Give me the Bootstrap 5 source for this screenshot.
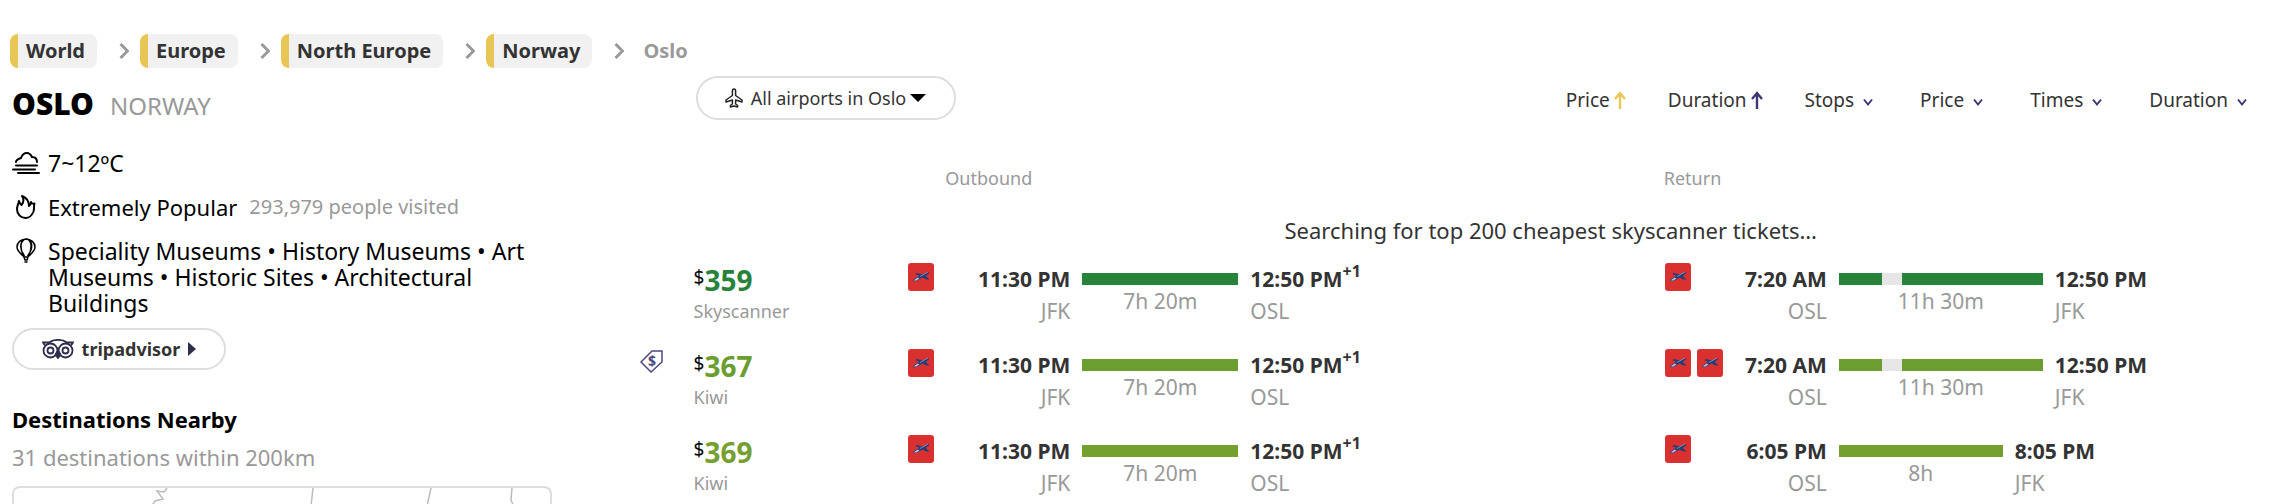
<!DOCTYPE html>
<html lang="en">
<head>
<meta charset="utf-8">
<meta name="viewport" content="width=device-width, initial-scale=1">
<title>Flights to Oslo</title>
<link href="https://cdn.jsdelivr.net/npm/bootstrap@5.3.0/dist/css/bootstrap.min.css" rel="stylesheet">
<style>
  body { font-family: "Noto Sans", sans-serif; font-size: 22px; line-height: 26px; color: #333; background: #fff; overflow: hidden; }
  button { font-family: inherit; }
  svg { display: block; }
  .soft { color: #999; }
  .crumbs { padding: 34px 10px 0; font-size: 20px; font-weight: 700; line-height: 34px; }
  .crumb { background: #f1f1f1; border-left: 8px solid #e8c656; border-radius: 8px; color: #333; text-decoration: none; padding: 0 12px 0 8px; }
  .crumb-arrow { margin: 0 11px 0 22px; }
  .sidebar { flex: 0 0 28%; padding: 16px 88px 0 12px; color: #000; }
  .city { font-size: 30px; font-weight: 900; line-height: 40px; }
  .country { font-size: 24px; line-height: 40px; }
  .facts { font-size: 23px; margin-top: 24px; }
  .fact { gap: 8px; margin-bottom: 18px; }
  .fact-icon { flex: 0 0 28px; }
  .popular { font-size: 22px; }
  .visited { font-size: 20px; }
  .pill { background: #fff; border: 2px solid #ddd; border-radius: 22px; padding: 0; font-size: 18px; color: #333; }
  .trip { height: 42px; width: 214px; font-weight: 700; margin-top: -6px; }
  .airports { height: 44px; width: 260px; }
  .nearby { font-size: 22px; line-height: 26px; margin-top: 36px; }
  .nearby-map { border: 2px solid #ddd; border-radius: 8px 8px 0 0; min-height: 0; }
  .results { padding-top: 8px; min-width: 0; }
  .toolbar { padding: 0 32px 0 56px; }
  .sorters { gap: 42px; padding-top: 3px; }
  .sorter { background: none; border: 0; padding: 0; font-size: 19px; color: #333; }
  .yellow { color: #e8c656; }
  .violet { color: #3e3672; }
  .flights { table-layout: fixed; margin-top: 45px; }
  .flights th { font-size: 18px; font-weight: 400; color: #999; height: 26px; padding: 0 0 0 38px; }
  .flights .th-return { padding-left: 0; }
  .flights td { height: 86px; padding: 0; vertical-align: top; }
  .flights tr:last-child td { height: 66px; }
  .flights tr .searching { height: 72px; padding: 26px 0 0 178px; }
  .col-tag { width: 54px; }
  .col-price { width: 13%; }
  .col-out { width: 46%; }
  .price { font-size: 28px; font-weight: 700; line-height: 34px; }
  .dollar { font-size: 19px; font-weight: 400; color: #000; line-height: 20px; }
  .seller { font-size: 18px; line-height: 28px; }
  .carrier { width: 163px; }
  .stop { line-height: 32px; font-size: 21px; }
  .clock { font-weight: 700; color: #333; }
  .next-day { font-size: 16px; line-height: 16px; }
  .track { height: 12px; margin-top: 10px; }
  .best { color: #27833a; }
  .good { color: #6b9d30; }
  .fair { color: #73a02e; }
  .flown { background: currentColor; }
  .layover { background: #e6e6e6; }
</style>
</head>
<body class="vh-100 d-flex flex-column">
<svg width="0" height="0" class="position-absolute" aria-hidden="true">
  <defs>
    <symbol id="airline" viewBox="0 0 26 28">
      <rect width="26" height="28" rx="3" fill="#db3030"/>
      <path d="M5 17l4-3 3-1-5-2 2-1 6 1.500 5-2.500 1.500 1-4 3 4 3.500-3 0-4-2-5 3-4 1z" fill="#1c3f7c"/>
      <path d="M5.500 17.500l4-3 2 1-3 2z" fill="#b7bfd8"/>
      <path d="M12 13.500l8-4.500" stroke="#7d8fbe"/>
    </symbol>
    <symbol id="crumb-chevron" viewBox="0 0 10 16"><path d="M1.500 1l7 7-7 7" fill="none" stroke="#999" stroke-width="3"/></symbol>
    <symbol id="down" viewBox="0 0 20 20"><path d="M6 9.500l4 5 4-5" fill="none" stroke="#3e3672" stroke-width="2"/></symbol>
    <symbol id="up" viewBox="0 0 12 18"><path d="M6 18V2M1 8l5-6 5 6" fill="none" stroke="currentColor" stroke-width="2.400"/></symbol>
  </defs>
</svg>

<nav class="crumbs d-flex align-items-center" aria-label="Breadcrumb">
  <a class="crumb" href="#">World</a>
  <svg class="crumb-arrow" width="10" height="16"><use href="#crumb-chevron"/></svg>
  <a class="crumb" href="#">Europe</a>
  <svg class="crumb-arrow" width="10" height="16"><use href="#crumb-chevron"/></svg>
  <a class="crumb" href="#">North Europe</a>
  <svg class="crumb-arrow" width="10" height="16"><use href="#crumb-chevron"/></svg>
  <a class="crumb" href="#">Norway</a>
  <svg class="crumb-arrow" width="10" height="16"><use href="#crumb-chevron"/></svg>
  <span class="soft ps-2">Oslo</span>
</nav>

<div class="d-flex flex-grow-1">
  <aside class="sidebar d-flex flex-column">
    <div class="d-flex align-items-baseline gap-3">
      <h1 class="city m-0">OSLO</h1><span class="country soft">NORWAY</span>
    </div>
    <div class="facts">
      <div class="fact d-flex align-items-center">
        <svg class="fact-icon" width="28" height="22" viewBox="0 0 28 22" fill="none" stroke="#000" stroke-width="2" stroke-linecap="round"><path d="M4 10c0-2 2-3 5-4 1-3 3-5 6-5 2 0 4 2 5 4 3 0 5 2 5 5M4 13.500h21M1 17.500h22M6 21h21"/></svg>
        <span>7~12ºC</span>
      </div>
      <div class="fact d-flex align-items-center popular">
        <svg class="fact-icon" width="28" height="24" viewBox="0 0 28 24" fill="none" stroke="#000" stroke-width="2" stroke-linejoin="round"><path d="M10 1c5 2 7 5 7 10 1.500-1 2-2.500 2-4 0 1 2 2 3.500 1.500-1 3 0 5-1 8-1.500 4-5 6.500-8 6.500-5 0-8.500-4-8.500-9 0-3 1.500-5 2-8 .5 2 1 3 2.500 4C12 7 12 4 10 1z"/></svg>
        <span>Extremely Popular</span><span class="visited soft ms-1">293,979 people visited</span>
      </div>
      <div class="fact d-flex">
        <svg class="fact-icon" width="28" height="26" viewBox="0 0 28 26" fill="none" stroke="#000" stroke-width="1.500"><path d="M12 19C8 15 5 13 5 9a9 8 0 0 1 18 0c0 4-3 6-7 10M12 19C6 7 10 1 14 1s8 6 2 18M12.500 18C6 10 9 2 14 1s9 8 1.500 17M12 19l1 3h2l1-3zM12.500 24h3"/></svg>
        <span>Speciality Museums • History Museums • Art Museums • Historic Sites • Architectural Buildings</span>
      </div>
    </div>
    <button type="button" class="pill trip d-flex align-items-center justify-content-center flex-shrink-0">
      <svg class="me-2" width="32" height="20" viewBox="0 0 32 20" fill="none" stroke="#2e2d4d" stroke-width="1.800"><path d="M7 3.500c5-3.500 13-3.500 18 0M8 3.500H1l2 3M24 3.500h7l-2 3"/><circle cx="8.500" cy="11.500" r="7"/><circle cx="23.500" cy="11.500" r="7"/><circle cx="8.500" cy="11.500" r="3"/><circle cx="23.500" cy="11.500" r="3"/><path d="M13.500 15.500l2.500 3.500 2.500-3.500-2.500-4z" fill="#2e2d4d"/></svg>
      <span>tripadvisor</span>
      <svg class="ms-2" width="8" height="14" viewBox="0 0 8 14"><path d="M0 0l8 7-8 7z" fill="#2e2d4d"/></svg>
    </button>
    <h2 class="nearby mb-0 fw-bold">Destinations Nearby</h2>
    <p class="soft mt-2 pt-1 mb-3">31 destinations within 200km</p>
    <div class="nearby-map border-bottom-0 flex-grow-1 overflow-hidden">
      <svg width="100%" height="16" fill="none" stroke="#bbb" stroke-width="1.500"><path d="M153 0l-3 4-7-1 6 8-8 2-4 6M299 0l-2 18M417 0l-4 18M498 0l-1 12 3 7"/></svg>
    </div>
  </aside>

  <main class="results flex-grow-1">
    <div class="toolbar d-flex justify-content-between align-items-center">
      <button type="button" class="pill airports d-flex align-items-center justify-content-center">
        <svg class="me-2" width="18" height="20" viewBox="0 0 18 20" fill="none" stroke="#222" stroke-width="1.500" stroke-linejoin="round"><path d="M9 1c1.300 0 1.600 1 1.600 2v4.500L17 12v2l-6.400-2v4l2 1.500V19L9 18l-3.600 1v-1.500l2-1.500v-4L1 14v-2l6.400-4.500V3c0-1 .3-2 1.600-2z"/></svg>
        <span>All airports in Oslo</span>
        <svg class="ms-1" width="16" height="8" viewBox="0 0 16 8"><path d="M0 0h16l-8 8z"/></svg>
      </button>
      <div class="sorters d-flex align-items-center">
        <button type="button" class="sorter d-flex align-items-center">Price<svg class="yellow ms-1" width="12" height="18"><use href="#up"/></svg></button>
        <button type="button" class="sorter d-flex align-items-center">Duration<svg class="violet ms-1" width="12" height="18"><use href="#up"/></svg></button>
        <button type="button" class="sorter d-flex align-items-center">Stops<svg class="ms-1" width="20" height="20"><use href="#down"/></svg></button>
        <button type="button" class="sorter d-flex align-items-center">Price<svg class="ms-1" width="20" height="20"><use href="#down"/></svg></button>
        <button type="button" class="sorter d-flex align-items-center">Times<svg class="ms-1" width="20" height="20"><use href="#down"/></svg></button>
        <button type="button" class="sorter d-flex align-items-center">Duration<svg class="ms-1" width="20" height="20"><use href="#down"/></svg></button>
      </div>
    </div>

    <table class="flights w-100">
      <colgroup><col class="col-tag"><col class="col-price"><col class="col-out"><col></colgroup>
      <thead><tr><td class="h-auto"></td><td class="h-auto"></td><th scope="col">Outbound</th><th scope="col" class="th-return">Return</th></tr></thead>
      <tbody id="rows"><tr><td colspan="4" class="searching text-center">Searching for top 200 cheapest skyscanner tickets…</td></tr></tbody>
    </table>
  </main>
</div>

<script>
  const out = { logos: 1, from: ['11:30 PM', 'JFK'], to: ['12:50 PM', 'OSL'], plus: '+1', time: '7h 20m', width: 156, parts: [100] };
  const longBack = { logos: 1, from: ['7:20 AM', 'OSL'], to: ['12:50 PM', 'JFK'], time: '11h 30m', width: 204, parts: [21, 10, 69] };
  const flights = [
    { price: 359, seller: 'Skyscanner', tone: 'best', legs: [out, longBack] },
    { price: 367, seller: 'Kiwi', tone: 'good', deal: true, legs: [out, { ...longBack, logos: 2 }] },
    { price: 369, seller: 'Kiwi', tone: 'fair', legs: [out, { logos: 1, from: ['6:05 PM', 'OSL'], to: ['8:05 PM', 'JFK'], time: '8h', width: 164, parts: [100] }] }
  ];
  const deal = `<svg width="24" height="24" viewBox="0 0 24 24" fill="none" stroke="#4d4680" stroke-width="1.500"><path d="M12 2h10v11l-11 10L1 13z"/><text x="12" y="17" font-size="14" font-weight="700" text-anchor="middle" fill="#4d4680" stroke="none">$</text></svg>`;
  const leg = (l, tone) => `
    <div class="d-flex">
      <div class="carrier d-flex justify-content-between">
        <div class="d-flex gap-1">${'<svg width="28" height="28"><use href="#airline"/></svg>'.repeat(l.logos)}</div>
        <div class="stop text-end text-nowrap"><div class="clock">${l.from[0]}</div><div class="soft">${l.from[1]}</div></div>
      </div>
      <div class="mx-2 px-1">
        <div class="track d-flex ${tone}" style="width:${l.width}px">${l.parts.map((p, i) => `<span class="${i % 2 ? 'layover' : 'flown'}" style="width:${p}%"></span>`).join('')}</div>
        <div class="stop soft text-center">${l.time}</div>
      </div>
      <div class="stop text-nowrap"><div class="clock d-flex align-items-start">${l.to[0]}${l.plus ? `<span class="next-day">${l.plus}</span>` : ''}</div><div class="soft">${l.to[1]}</div></div>
    </div>`;
  document.getElementById('rows').insertAdjacentHTML('beforeend', flights.map(f => `
    <tr>
      <td>${f.deal ? deal : ''}</td>
      <td><div class="price ${f.tone} d-flex"><span class="dollar pt-1">$</span>${f.price}</div><div class="seller soft">${f.seller}</div></td>
      <td>${leg(f.legs[0], f.tone)}</td>
      <td>${leg(f.legs[1], f.tone)}</td>
    </tr>`).join(''));
</script>
<script src="https://cdn.jsdelivr.net/npm/bootstrap@5.3.0/dist/js/bootstrap.bundle.min.js"></script>
</body>
</html>
